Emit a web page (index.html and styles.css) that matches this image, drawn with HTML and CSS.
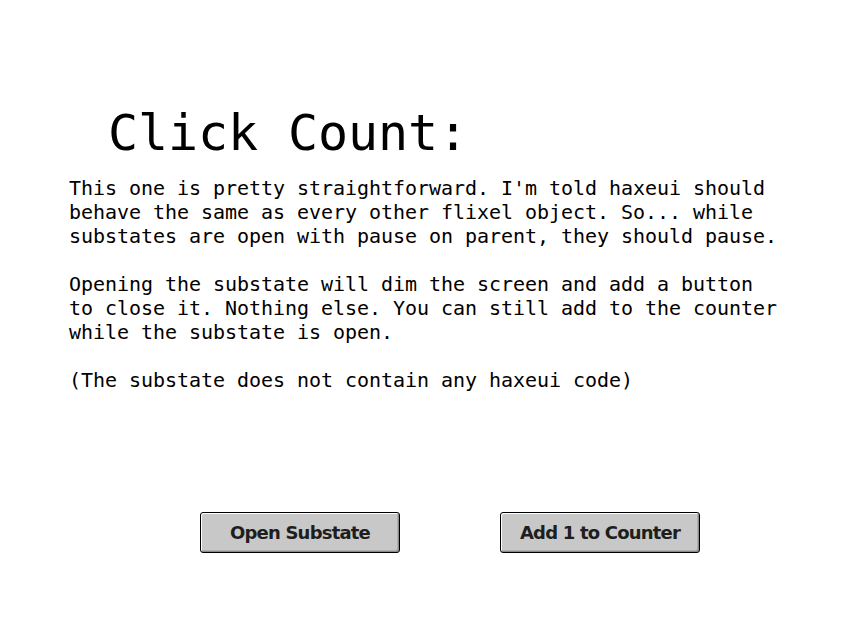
FILE: index.html
```html
<!DOCTYPE html>
<html>
<head>
<meta charset="utf-8">
<link rel="stylesheet" href="styles.css">
</head>
<body>
<div class="page">
  <h1 class="title">Click Count:</h1>
  <div class="body-text">This one is pretty straightforward. I'm told haxeui should
behave the same as every other flixel object. So... while
substates are open with pause on parent, they should pause.

Opening the substate will dim the screen and add a button
to close it. Nothing else. You can still add to the counter
while the substate is open.

(The substate does not contain any haxeui code)</div>
  <div class="buttons">
    <button class="btn">Open Substate</button>
    <button class="btn">Add 1 to Counter</button>
  </div>
</div>
</body>
</html>
```
FILE: styles.css
```css
html, body {
  margin: 0;
  padding: 0;
  background: #ffffff;
}
.page {
  width: 850px;
  height: 640px;
  padding-top: 108px;
  box-sizing: border-box;
  font-family: "DejaVu Sans Mono", monospace;
  color: #000;
}
.title {
  margin: 0 0 18px 108px;
  font-size: 50px;
  line-height: 50px;
  font-weight: normal;
  letter-spacing: -0.1px;
}
.body-text {
  margin: 0 0 0 69px;
  font-size: 20px;
  line-height: 24px;
  white-space: pre;
  letter-spacing: -0.04px;
}
.buttons {
  display: flex;
  gap: 100px;
  padding-left: 200px;
  margin-top: 120px;
}
.btn {
  width: 200px;
  height: 41px;
  border: 1px solid #000;
  border-radius: 3px;
  background: #c8c8c8;
  box-shadow: inset 1px 1px 0 #ffffff, inset -1px -1px 0 #8a8a8a, inset -2px -2px 0 #b0b0b0;
  font-family: "DejaVu Sans", sans-serif;
  font-weight: bold;
  font-size: 18px;
  letter-spacing: -0.8px;
  color: #1e1e1e;
  padding: 0;
}
```
